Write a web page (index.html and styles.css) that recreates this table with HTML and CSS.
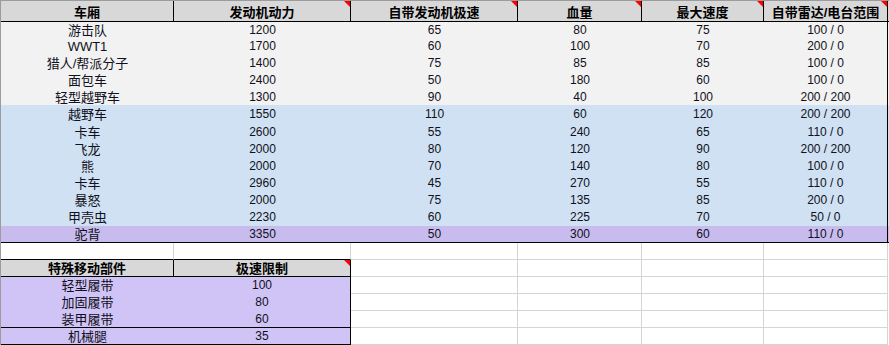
FILE: index.html
```html
<!DOCTYPE html>
<html lang="zh">
<head>
<meta charset="utf-8">
<title>车厢</title>
<link rel="stylesheet" href="styles.css">
</head>
<body>
<div class="sheet">
  <div class="main">
    <div class="row head">
      <div class="cell">车厢</div>
      <div class="cell note">发动机动力</div>
      <div class="cell note">自带发动机极速</div>
      <div class="cell note">血量</div>
      <div class="cell note">最大速度</div>
      <div class="cell note last">自带雷达/电台范围</div>
    </div>
    <div class="row gray h16"><div class="cell name">游击队</div><div class="cell">1200</div><div class="cell">65</div><div class="cell">80</div><div class="cell">75</div><div class="cell last">100 / 0</div></div>
    <div class="row gray h17"><div class="cell name">WWT1</div><div class="cell">1700</div><div class="cell">60</div><div class="cell">100</div><div class="cell">70</div><div class="cell last">200 / 0</div></div>
    <div class="row gray h17"><div class="cell name">猎人/帮派分子</div><div class="cell">1400</div><div class="cell">75</div><div class="cell">85</div><div class="cell">85</div><div class="cell last">100 / 0</div></div>
    <div class="row gray h17"><div class="cell name">面包车</div><div class="cell">2400</div><div class="cell">50</div><div class="cell">180</div><div class="cell">60</div><div class="cell last">100 / 0</div></div>
    <div class="row gray h16"><div class="cell name">轻型越野车</div><div class="cell">1300</div><div class="cell">90</div><div class="cell">40</div><div class="cell">100</div><div class="cell last">200 / 200</div></div>
    <div class="row blue h19"><div class="cell name">越野车</div><div class="cell">1550</div><div class="cell">110</div><div class="cell">60</div><div class="cell">120</div><div class="cell last">200 / 200</div></div>
    <div class="row blue h17"><div class="cell name">卡车</div><div class="cell">2600</div><div class="cell">55</div><div class="cell">240</div><div class="cell">65</div><div class="cell last">110 / 0</div></div>
    <div class="row blue h17"><div class="cell name">飞龙</div><div class="cell">2000</div><div class="cell">80</div><div class="cell">120</div><div class="cell">90</div><div class="cell last">200 / 200</div></div>
    <div class="row blue h17"><div class="cell name">熊</div><div class="cell">2000</div><div class="cell">70</div><div class="cell">140</div><div class="cell">80</div><div class="cell last">100 / 0</div></div>
    <div class="row blue h17"><div class="cell name">卡车</div><div class="cell">2960</div><div class="cell">45</div><div class="cell">270</div><div class="cell">55</div><div class="cell last">110 / 0</div></div>
    <div class="row blue h17"><div class="cell name">暴怒</div><div class="cell">2000</div><div class="cell">75</div><div class="cell">135</div><div class="cell">85</div><div class="cell last">200 / 0</div></div>
    <div class="row blue h17"><div class="cell name">甲壳虫</div><div class="cell">2230</div><div class="cell">60</div><div class="cell">225</div><div class="cell">70</div><div class="cell last">50 / 0</div></div>
    <div class="row purple end"><div class="cell name">驼背</div><div class="cell">3350</div><div class="cell">50</div><div class="cell">300</div><div class="cell">60</div><div class="cell last">110 / 0</div></div>
  </div>
  <div class="lower">
    <div class="row blank">
      <div class="cell top"></div><div class="cell top"></div><div class="cell"></div><div class="cell"></div><div class="cell"></div><div class="cell"></div>
    </div>
    <div class="row">
      <div class="cell subhead">特殊移动部件</div><div class="cell subhead note">极速限制</div><div class="cell"></div><div class="cell"></div><div class="cell"></div><div class="cell"></div>
    </div>
    <div class="row">
      <div class="cell part name">轻型履带</div><div class="cell part edge">100</div><div class="cell"></div><div class="cell"></div><div class="cell"></div><div class="cell"></div>
    </div>
    <div class="row">
      <div class="cell part name">加固履带</div><div class="cell part edge">80</div><div class="cell"></div><div class="cell"></div><div class="cell"></div><div class="cell"></div>
    </div>
    <div class="row">
      <div class="cell part name closed">装甲履带</div><div class="cell part edge closed">60</div><div class="cell"></div><div class="cell"></div><div class="cell"></div><div class="cell"></div>
    </div>
    <div class="row">
      <div class="cell part name closed">机械腿</div><div class="cell part edge closed">35</div><div class="cell"></div><div class="cell"></div><div class="cell"></div><div class="cell"></div>
    </div>
  </div>
</div>
</body>
</html>
```
FILE: styles.css
```css
* { box-sizing: border-box; }
html, body { margin: 0; padding: 0; background: #fff; }
body {
  font-family: "Liberation Sans", "Noto Sans CJK SC", sans-serif;
  font-size: 12px;
  color: #101020;
}
.sheet {
  width: 889px;
  height: 345px;
  border-left: 1px solid #9c9c9c;
  border-top: 1px solid #9c9c9c;
  display: flex;
  flex-direction: column;
  overflow: hidden;
}
.row {
  display: grid;
  grid-template-columns: 173px 177px 167px 124px 122px 124px;
}
.cell {
  display: flex;
  align-items: center;
  justify-content: center;
  line-height: 15px;
  white-space: nowrap;
  position: relative;
}
.name { font-size: 13px; }
.head { height: 21px; background: #d8d8d8; border-bottom: 1px solid #000; }
.head .cell {
  border-right: 1px solid #000;
  font-weight: bold;
  font-size: 13px;
  color: #000;
  align-items: flex-end;
  padding-bottom: 1px;
}
.note::after {
  content: "";
  position: absolute;
  top: 0;
  right: 0;
  width: 0;
  height: 0;
  border-top: 6px solid #ff0000;
  border-left: 6px solid transparent;
}
.gray { background: #f2f2f2; }
.blue { background: #cfe1f3; }
.purple { background: #c8bcee; }
.h16 { height: 16px; }
.h17 { height: 17px; }
.h19 { height: 19px; }
.end { height: 17px; border-bottom: 1px solid #000; }
.last { border-right: 1px solid #000; }

.lower .row { height: 17px; }
.lower .cell {
  border-right: 1px solid #d4d4d4;
  border-bottom: 1px solid #d4d4d4;
}
.blank .cell:nth-child(1), .blank .cell:nth-child(2) { border-bottom-color: #000; }
.lower .subhead {
  background: #d8d8d8;
  font-weight: bold;
  font-size: 13px;
  color: #000;
  border-right: 1px solid #000;
  border-bottom: 1px solid #000;
}
.lower .part {
  background: #d0c4f6;
  border-right: 0;
  border-bottom: 0;
}
.lower .part.edge { border-right: 1px solid #000; }
.lower .part.closed { border-bottom: 1px solid #000; }
```
